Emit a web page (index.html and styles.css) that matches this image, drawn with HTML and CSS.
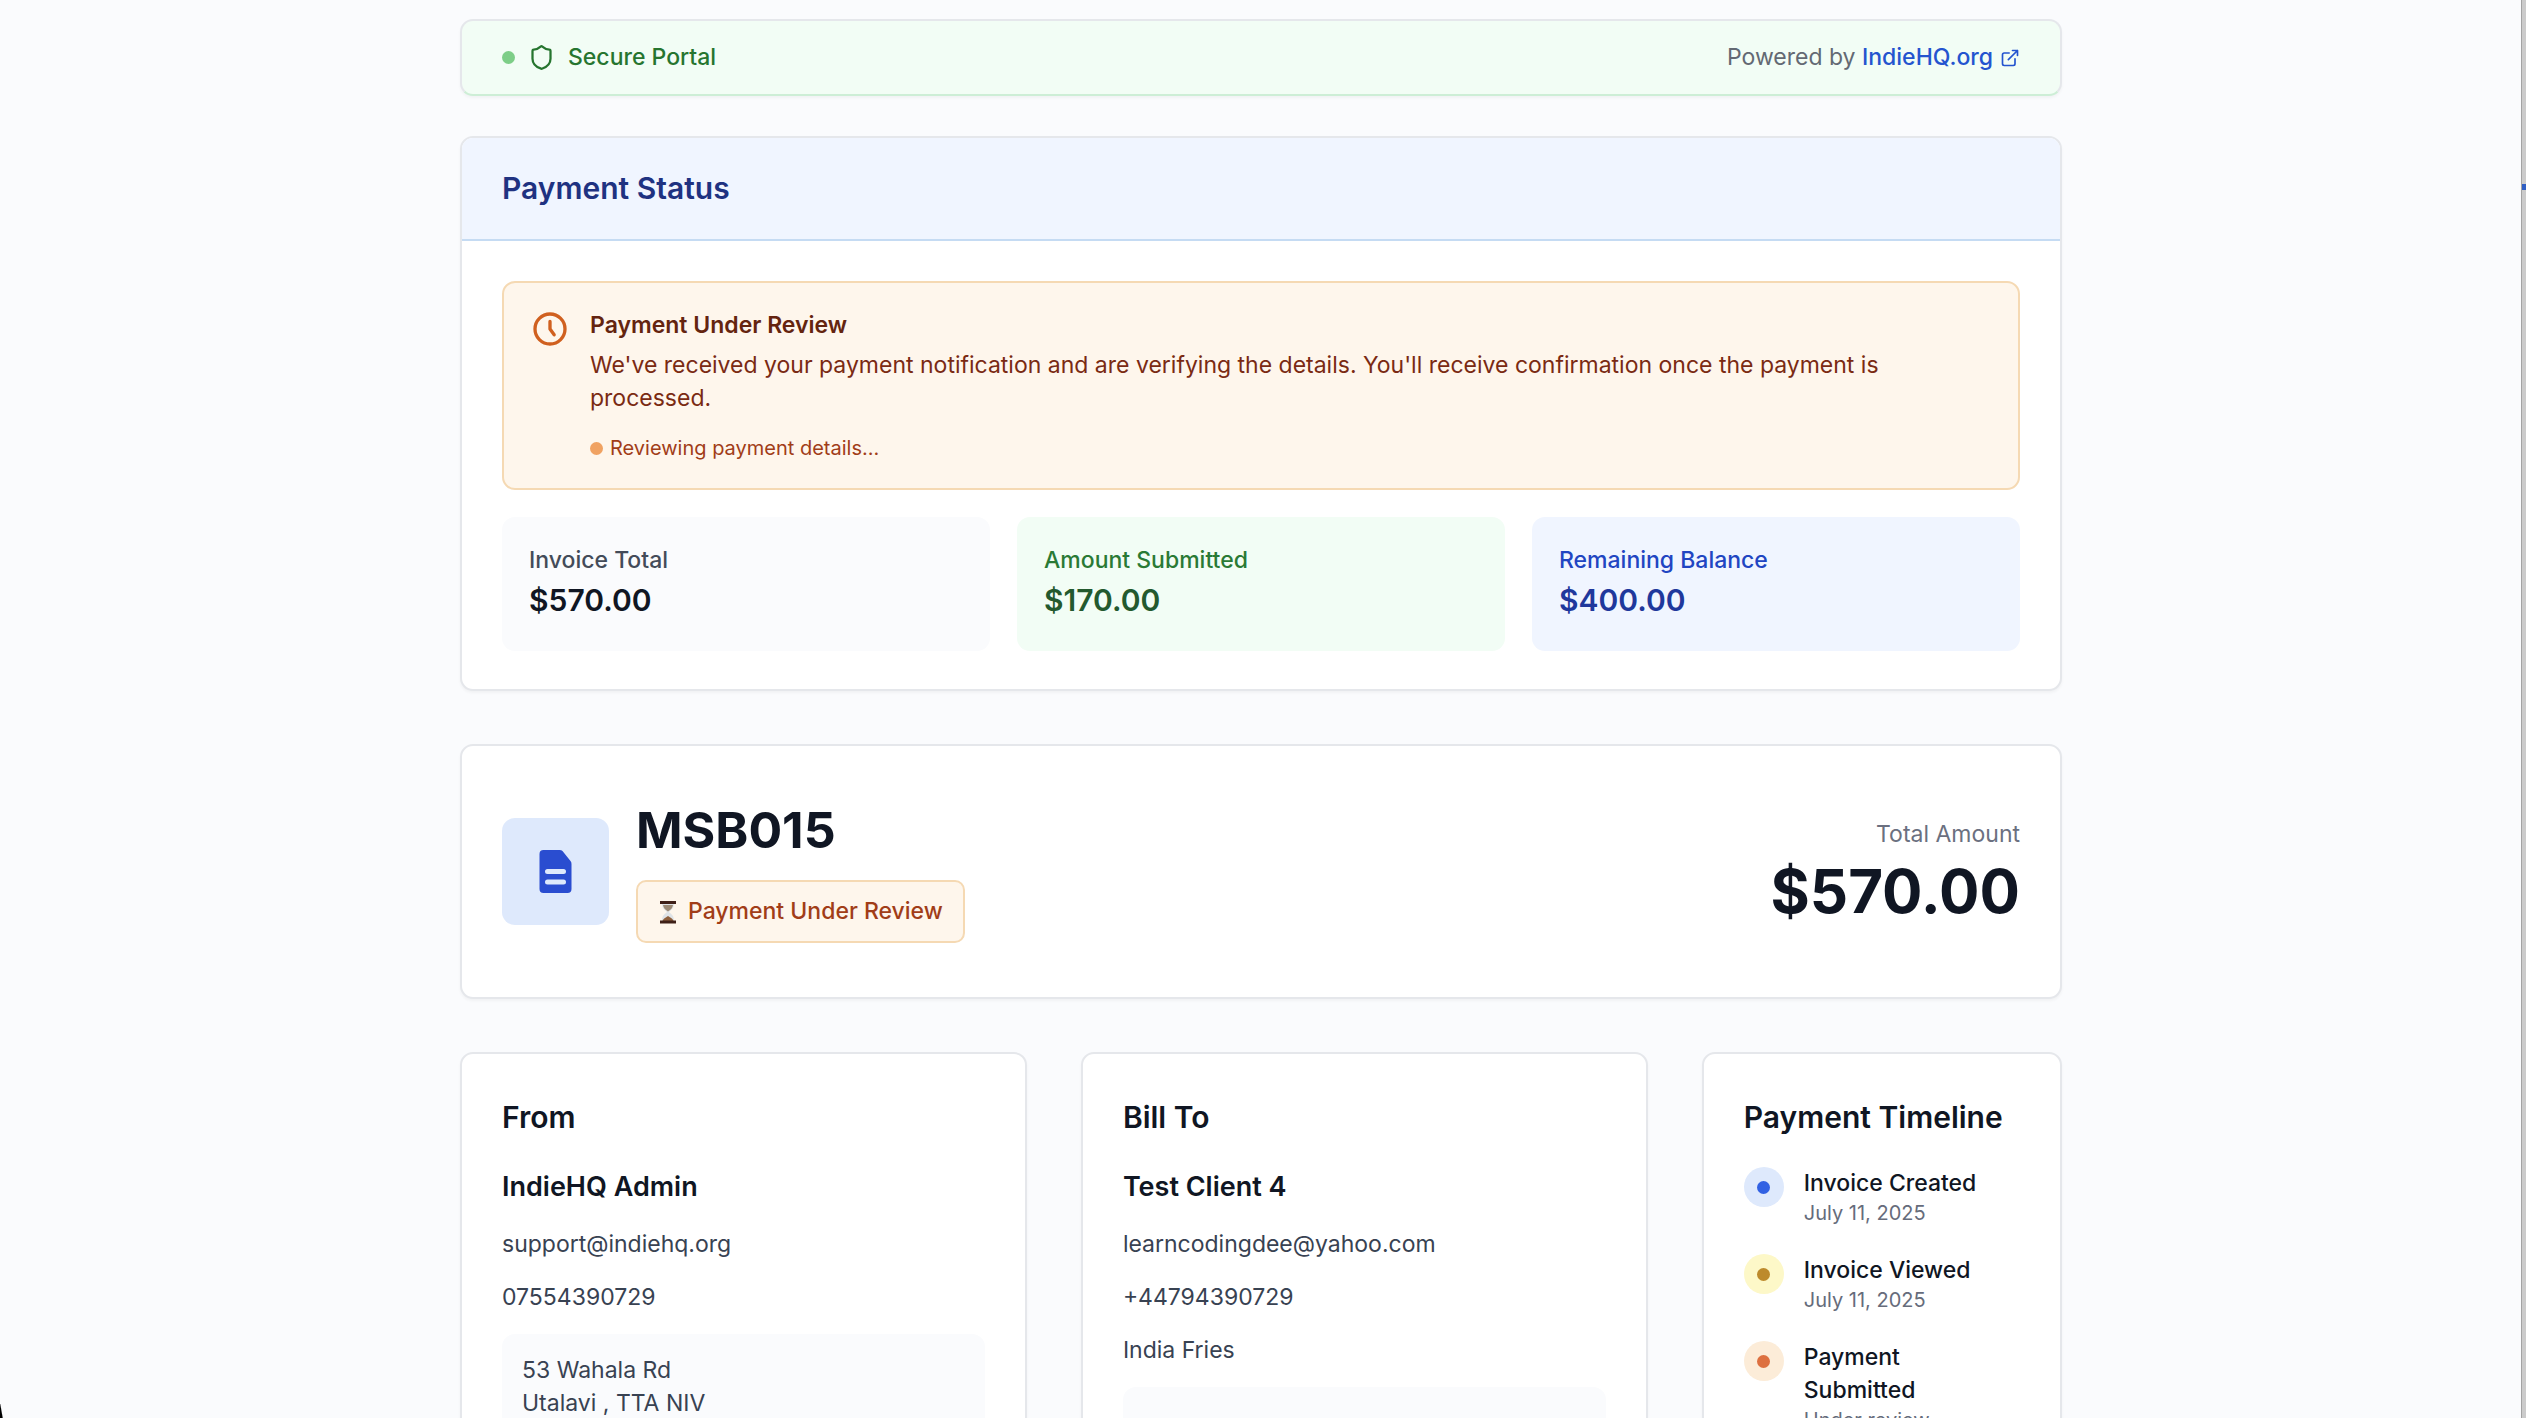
FILE: index.html
```html
<!DOCTYPE html>
<html lang="en">
<head>
    <meta charset="UTF-8">
    <meta name="viewport" content="width=device-width, initial-scale=1.0">
    <title>Invoice MSB015</title>
    <link rel="stylesheet" href="styles.css">
</head>
<body>
    <main class="page">
        <header class="card portal-bar">
            <div class="portal-label">
                <span class="portal-dot"></span>
                <svg class="shield-icon" viewBox="0 0 24 24" fill="none" stroke="currentColor" stroke-width="2" stroke-linecap="round" stroke-linejoin="round">
                    <path d="M20 13c0 5-3.500 7.500-7.660 8.950a1 1 0 0 1-.67-.01C7.500 20.500 4 18 4 13V6a1 1 0 0 1 1-1c2 0 4.500-1.200 6.240-2.720a1.170 1.170 0 0 1 1.520 0C14.510 3.810 17 5 19 5a1 1 0 0 1 1 1z"/>
                </svg>
                <span>Secure Portal</span>
            </div>
            <div class="powered">
                Powered by
                <a href="#">IndieHQ.org
                    <svg class="link-icon" viewBox="0 0 24 24" fill="none" stroke="currentColor" stroke-width="2" stroke-linecap="round" stroke-linejoin="round">
                        <path d="M15 3h6v6M10 14 21 3M18 13v6a2 2 0 0 1-2 2H5a2 2 0 0 1-2-2V8a2 2 0 0 1 2-2h6"/>
                    </svg>
                </a>
            </div>
        </header>

        <section class="card status-card">
            <h2 class="status-header">Payment Status</h2>
            <div class="status-body">
                <div class="alert">
                    <svg class="clock-icon" viewBox="0 0 24 24" fill="none" stroke="currentColor" stroke-width="2" stroke-linecap="round" stroke-linejoin="round">
                        <path d="M12 7.500v4.500l2.500 3.500"/>
                        <circle cx="12" cy="12" r="9"/>
                    </svg>
                    <div class="alert-text">
                        <h3>Payment Under Review</h3>
                        <p>We've received your payment notification and are verifying the details. You'll receive confirmation once the payment is processed.</p>
                        <div class="alert-progress"><span class="alert-dot"></span>Reviewing payment details...</div>
                    </div>
                </div>
                <div class="stats">
                    <div class="stat">
                        <p>Invoice Total</p>
                        <strong>$570.00</strong>
                    </div>
                    <div class="stat green">
                        <p>Amount Submitted</p>
                        <strong>$170.00</strong>
                    </div>
                    <div class="stat blue">
                        <p>Remaining Balance</p>
                        <strong>$400.00</strong>
                    </div>
                </div>
            </div>
        </section>

        <section class="card invoice-card">
            <div class="invoice-main">
                <div class="invoice-icon">
                    <svg viewBox="0 0 32 43">
                        <path class="sheet" d="M4 0h16q2 0 3 1l8 10q1 1 1 3v25q0 4-4 4H4q-4 0-4-4V4q0-4 4-4z"/>
                        <path class="lines" d="M8 21.500h16M8 32h16"/>
                    </svg>
                </div>
                <div>
                    <h1>MSB015</h1>
                    <div class="badge">
                        <svg class="hourglass-icon" viewBox="0 0 18 24">
                            <path class="glass" d="M3 3h12c0 5-2 6.500-5 9 3 2.500 5 4 5 9H3c0-5 2-6.500 5-9-3-2.500-5-4-5-9z"/>
                            <path class="sand" d="M4 5h10c-.5 3-2 4.500-5 6.500C6 9.500 4.500 8 4 5z"/>
                            <path class="pile" d="M3.500 21c.5-2 3-3.500 5.500-5 2.500 1.500 5 3 5.500 5z"/>
                            <path class="frame" d="M1 1h16v3H1zM1 20.500h16v3H1z"/>
                        </svg>
                        Payment Under Review
                    </div>
                </div>
            </div>
            <div class="invoice-total">
                <p>Total Amount</p>
                <strong>$570.00</strong>
            </div>
        </section>

        <div class="details">
            <section class="card party">
                <h2>From</h2>
                <h3>IndieHQ Admin</h3>
                <p>support@indiehq.org</p>
                <p>07554390729</p>
                <address>53 Wahala Rd<br>Utalavi , TTA NIV</address>
            </section>
            <section class="card party">
                <h2>Bill To</h2>
                <h3>Test Client 4</h3>
                <p>learncodingdee@yahoo.com</p>
                <p>+44794390729</p>
                <p>India Fries</p>
                <address></address>
            </section>
            <section class="card timeline">
                <h2>Payment Timeline</h2>
                <ul>
                    <li>
                        <span class="marker blue"></span>
                        <div><h4>Invoice Created</h4><p>July 11, 2025</p></div>
                    </li>
                    <li>
                        <span class="marker yellow"></span>
                        <div><h4>Invoice Viewed</h4><p>July 11, 2025</p></div>
                    </li>
                    <li>
                        <span class="marker orange"></span>
                        <div><h4>Payment<br>Submitted</h4><p>Under review</p></div>
                    </li>
                </ul>
            </section>
        </div>
    </main>
    <div class="window-edge"></div>
    <div class="window-corner"></div>
</body>
</html>
```
FILE: styles.css
```css
* {
    box-sizing: border-box;
}
body {
    margin: 0;
    height: 100vh;
    overflow: hidden;
    padding: 19px 4px 0 0;
    background-color: #fafbfd;
    color: #101623;
    font-family: Inter, "Liberation Sans", sans-serif;
    font-size: 23px;
    line-height: 33px;
}
h1, h2, h3, h4, p, ul {
    margin: 0;
    padding: 0;
}
h2 {
    font-size: 30px;
    line-height: 47px;
    font-weight: 600;
}
.page {
    max-width: 1602px;
    margin: 0 auto;
}
.card {
    background-color: white;
    border: 2px solid #e5e7eb;
    border-radius: 13px;
    box-shadow: 0 2px 3px rgba(0,0,0,0.04);
}

/* top bar */
.portal-bar {
    display: flex;
    justify-content: space-between;
    align-items: center;
    padding: 20px 40px;
    margin-bottom: 40px;
    background-color: #f2fdf5;
    border-bottom-color: #cdeed6;
}
.portal-label {
    display: flex;
    align-items: center;
    color: #26752f;
    font-weight: 500;
}
.portal-dot {
    width: 13px;
    height: 13px;
    border-radius: 50%;
    background-color: #7dce87;
    margin-right: 13px;
}
.shield-icon {
    width: 27px;
    height: 27px;
    margin-right: 13px;
}
.powered {
    color: #636973;
}
.powered a {
    display: inline-flex;
    align-items: center;
    gap: 7px;
    color: #2454cf;
    font-weight: 500;
    text-decoration: none;
}
.link-icon {
    width: 20px;
    height: 20px;
}

/* payment status */
.status-card {
    margin-bottom: 53px;
    overflow: hidden;
}
.status-header {
    padding: 27px 40px;
    background-color: #f0f5ff;
    border-bottom: 2px solid #c5dbf3;
    color: #1f3281;
}
.status-body {
    padding: 40px 40px 38px;
}
.alert {
    display: flex;
    gap: 20px;
    padding: 26px;
    border: 2px solid #f5d9b3;
    border-radius: 13px;
    background-color: #fef6ec;
    color: #7a2a13;
}
.clock-icon {
    flex: none;
    width: 40px;
    height: 40px;
    color: #d0601f;
}
.alert-text h3 {
    font-size: 23px;
    font-weight: 600;
    color: #64240f;
    margin-bottom: 7px;
}
.alert-progress {
    display: flex;
    align-items: center;
    gap: 7px;
    margin-top: 20px;
    font-size: 20px;
    line-height: 27px;
    color: #a13d18;
}
.alert-dot {
    width: 13px;
    height: 13px;
    border-radius: 50%;
    background-color: #f0a262;
}
.stats {
    display: grid;
    grid-template-columns: repeat(3, 1fr);
    gap: 27px;
    margin-top: 27px;
}
.stat {
    padding: 27px;
    border-radius: 13px;
    background-color: #fafbfd;
}
.stat p {
    color: #434b59;
    font-weight: 500;
}
.stat strong {
    display: block;
    font-size: 30px;
    line-height: 47px;
    font-weight: 600;
}
.stat.green {
    background-color: #f2fdf5;
}
.stat.green p {
    color: #2a7a35;
}
.stat.green strong {
    color: #23592e;
}
.stat.blue {
    background-color: #f0f5ff;
}
.stat.blue p {
    color: #2145c2;
}
.stat.blue strong {
    color: #1f389c;
}

/* invoice summary */
.invoice-card {
    display: flex;
    justify-content: space-between;
    align-items: center;
    padding: 54px 40px;
    margin-bottom: 53px;
}
.invoice-main {
    display: flex;
    align-items: center;
    gap: 27px;
}
.invoice-icon {
    display: flex;
    align-items: center;
    justify-content: center;
    width: 107px;
    height: 107px;
    border-radius: 13px;
    background-color: #dee9fc;
}
.invoice-icon svg {
    width: 33px;
    height: 43px;
}
.invoice-icon .sheet {
    fill: #2a4dd0;
}
.invoice-icon .lines {
    stroke: #dee9fc;
    stroke-width: 5;
    stroke-linecap: round;
}
h1 {
    font-size: 50px;
    line-height: 60px;
    font-weight: 700;
    margin-bottom: 20px;
}
.badge {
    display: inline-flex;
    align-items: center;
    gap: 10px;
    padding: 13px 20px;
    border: 2px solid #f5d9b3;
    border-radius: 10px;
    background-color: #fef6ec;
    color: #a13d18;
    font-weight: 500;
    vertical-align: top;
}
.hourglass-icon {
    width: 20px;
    height: 24px;
}
.hourglass-icon .glass {
    fill: #dfe3e6;
}
.hourglass-icon .sand {
    fill: #9c8a76;
}
.hourglass-icon .pile {
    fill: #8e5f3c;
}
.hourglass-icon .frame {
    fill: #3f2018;
}
.invoice-total {
    text-align: right;
}
.invoice-total p {
    color: #6b7080;
    margin-bottom: 7px;
}
.invoice-total strong {
    display: block;
    font-size: 60px;
    line-height: 67px;
    font-weight: 700;
}

/* details: the two party cards share three quarters of the row */
.details {
    display: grid;
    grid-template-columns: 1133fr 1133fr 720fr;
    gap: 54px;
}
.details .card {
    padding: 40px;
}
.details h2 {
    margin-bottom: 26px;
}
.party h3 {
    font-size: 27px;
    line-height: 40px;
    font-weight: 600;
    margin-bottom: 21px;
}
.party p {
    color: #384252;
    margin-bottom: 20px;
}
.party address {
    min-height: 106px;
    padding: 20px;
    border-radius: 13px;
    background-color: #fafbfd;
    color: #384252;
    font-style: normal;
}
.timeline ul {
    list-style: none;
}
.timeline li {
    display: flex;
    gap: 20px;
    margin-bottom: 27px;
}
.timeline h4 {
    font-size: 23px;
    font-weight: 500;
}
.timeline p {
    font-size: 20px;
    line-height: 27px;
    color: #666c7b;
}
.marker {
    display: flex;
    flex: none;
    align-items: center;
    justify-content: center;
    width: 40px;
    height: 40px;
    border-radius: 50%;
}
.marker::after {
    content: "";
    width: 13px;
    height: 13px;
    border-radius: 50%;
}
.marker.blue {
    background-color: #dee9fc;
}
.marker.blue::after {
    background-color: #3161e3;
}
.marker.yellow {
    background-color: #fdf8c8;
}
.marker.yellow::after {
    background-color: #bd8a2c;
}
.marker.orange {
    background-color: #fcecd8;
}
.marker.orange::after {
    background-color: #dd7040;
}

/* window frame */
.window-edge {
    position: fixed;
    top: 0;
    right: 0;
    bottom: 0;
    width: 5px;
    border-left: 1px solid #a3a3a3;
    background: linear-gradient(#cbcbcb 184px, #2f5fc4 184px, #2f5fc4 190px, #cbcbcb 190px);
}
.window-corner {
    position: fixed;
    left: 0;
    bottom: 0;
    width: 3px;
    height: 14px;
    background: linear-gradient(80deg, #000 40%, transparent 60%);
}
```
